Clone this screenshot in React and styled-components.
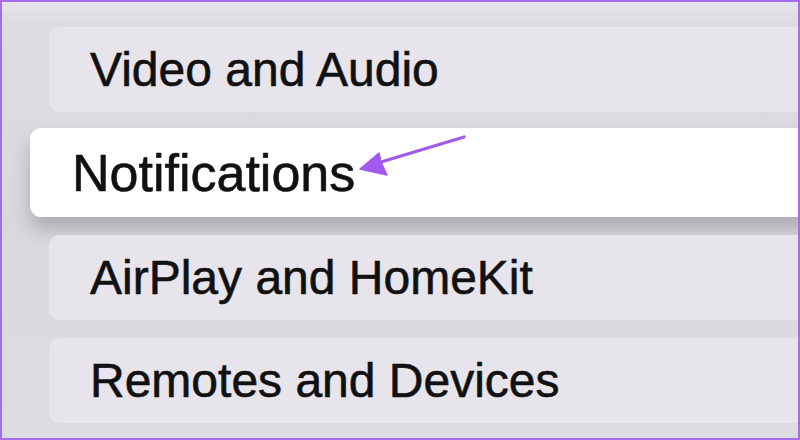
import React from 'react';
import styled, { createGlobalStyle } from 'styled-components';

const GlobalStyle = createGlobalStyle`
  html, body {
    margin: 0;
    padding: 0;
    background: #dcdbe1;
  }
  * {
    box-sizing: border-box;
  }
`;

const items = [
  { id: 'video', label: 'Video and Audio' },
  { id: 'notifications', label: 'Notifications', focused: true },
  { id: 'airplay', label: 'AirPlay and HomeKit' },
  { id: 'remotes', label: 'Remotes and Devices' },
];

export default function App() {
  return (
    <>
      <GlobalStyle />
      <Frame>
        <SettingsList>
          {items.map(item => (
            <SettingsRow key={item.id} $focused={item.focused}>
              <RowLabel $focused={item.focused}>{item.label}</RowLabel>
              {item.focused && (
                <Pointer viewBox="0 0 120 50" width="120" height="50">
                  <path d="M14 32 L107 4" stroke="#a259ee" strokeWidth="3.2" strokeLinecap="round" />
                  <path d="M3 36 L22 20 L24 29 L30 42 Z" fill="#a259ee" stroke="#a259ee" strokeWidth="1.5" strokeLinejoin="round" />
                </Pointer>
              )}
            </SettingsRow>
          ))}
        </SettingsList>
      </Frame>
    </>
  );
}

const Frame = styled.div`
  width: 800px;
  height: 440px;
  border: 2px solid #a56cf0;
  overflow: hidden;
  background: linear-gradient(180deg, #e6e5ea 0px, #dddce2 20px, #d9d8de 50%, #dddce2 100%);
  font-family: 'Liberation Sans', Arial, sans-serif;
`;

const SettingsList = styled.div`
  display: flex;
  flex-direction: column;
  gap: 18px;
  padding: 25px 0 0 47px;
  margin-right: -20px;
`;

const SettingsRow = styled.div`
  position: relative;
  display: flex;
  align-items: center;
  height: ${props => (props.$focused ? '89px' : '85px')};
  margin: ${props => (props.$focused ? '-2px 0 0 -19px' : '0')};
  padding-left: ${props => (props.$focused ? '42px' : '41px')};
  border-radius: 11px;
  background: ${props => (props.$focused ? '#ffffff' : '#e7e5eb')};
  box-shadow: ${props =>
    props.$focused ? '0 12px 18px rgba(60, 58, 70, 0.28)' : 'none'};
`;

const RowLabel = styled.span`
  color: #111113;
  font-size: ${props => (props.$focused ? '52px' : '48px')};
  line-height: 1;
  white-space: nowrap;
  -webkit-text-stroke: 0.6px #111113;
`;

const Pointer = styled.svg`
  position: absolute;
  left: 327px;
  top: 5px;
`;
